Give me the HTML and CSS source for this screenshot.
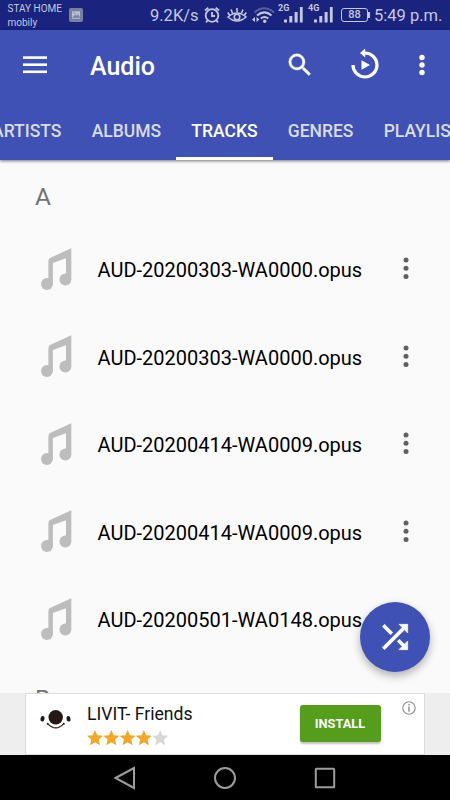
FILE: index.html
```html
<!DOCTYPE html>
<html lang="en">
<head>
<meta charset="utf-8">
<title>Audio</title>
<link rel="stylesheet" href="styles.css">
</head>
<body>
<div class="screen">
  <header class="status">
    <div class="carrier"><span>STAY HOME</span><span>mobily</span></div>
    <svg class="thumb" width="14" height="14" viewBox="0 0 14 14"><rect width="14" height="14" rx="2" fill="#76809f"/><rect x="3" y="3.3" width="8" height="7.4" fill="#bac0d0"/><path d="M3.5 9.8L6 7l1.5 1.3L9 6.5l1.8 3.3M4 4.5l3 1.5" fill="#76809f" stroke="#76809f" stroke-width=".6"/></svg>
    <span class="speed">9.2K/s</span>
    <svg class="alarm" width="16" height="18" viewBox="0 0 16 18" fill="none" stroke="#c5c8de" stroke-width="1.8"><circle cx="8" cy="9.5" r="6.3"/><path d="M8 6v4h3M1 4.5L4.3 1.7M15 4.5l-3.3-2.8M3.5 14.5L2 16.3M12.5 14.5l1.5 1.8"/></svg>
    <svg class="eye" width="20" height="18" viewBox="0 0 20 18" fill="none" stroke="#c5c8de" stroke-width="1.6"><path d="M1 11Q10 3 19 11Q10 19 1 11ZM10 6V2M5.5 7L4 3.5M14.500 7L16 3.500M2.500 9L.8 6.500M17.500 9l1.700-2.500"/><circle cx="10" cy="11" r="2.800"/></svg>
    <svg class="wifi" width="23" height="18" viewBox="0 0 23 18" fill="none" stroke-width="2"><path d="M2.500 6.500Q12.500-2 22 6.500" stroke="#555fa0"/><path d="M5 9.500Q12.500 3.300 19.500 9.500M8.800 12.500Q12.500 9.500 16.300 12.500" stroke="#c5c8de"/><circle cx="12.700" cy="15.300" r="1.700" fill="#c5c8de"/><path d="M0 13.500L3 11v5ZM7.500 13.500L4.500 11v5Z" fill="#c5c8de"/></svg>
    <div class="signal"><span>2G</span><svg width="20" height="16" viewBox="0 0 20 16" fill="#c5c8de"><rect y="12.500" width="3" height="3"/><rect x="5.300" y="9" width="3" height="6.500"/><rect x="10.600" y="5" width="3" height="10.500"/><rect x="15.900" width="2.800" height="15.500"/></svg></div>
    <div class="signal second"><span>4G</span><svg width="20" height="16" viewBox="0 0 20 16" fill="#c5c8de"><rect y="12.500" width="3" height="3"/><rect x="5.300" y="9" width="3" height="6.500"/><rect x="10.600" y="5" width="3" height="10.500"/><rect x="15.900" width="2.800" height="15.500"/></svg></div>
    <div class="battery">88</div>
    <span class="clock">5:49 p.m.</span>
  </header>
  <div class="appbar">
    <div class="toolbar">
      <svg class="burger" width="24" height="18" viewBox="0 0 24 18" fill="#fff"><rect y=".3" width="24" height="2.600"/><rect y="7.400" width="24" height="2.600"/><rect y="14.500" width="24" height="2.600"/></svg>
      <h1>Audio</h1>
      <svg class="search" width="30" height="30" viewBox="0 0 24 24" fill="#fff" stroke="#fff" stroke-width=".3"><path d="M15.500 14h-.79l-.28-.27A6.470 6.470 0 0 0 16 9.500 6.500 6.500 0 1 0 9.500 16c1.610 0 3.090-.59 4.230-1.570l.27.28v.79l5 4.990L20.490 19l-4.990-5zm-6 0C7.010 14 5 11.990 5 9.500S7.010 5 9.500 5 14 7.010 14 9.500 11.990 14 9.500 14z"/></svg>
      <svg class="replay" width="30" height="34" viewBox="0 0 30 34"><path d="M3 17A12 12 0 1 0 15 5" fill="none" stroke="#fff" stroke-width="3.200"/><path d="M15.200 .4v9.200L10 5ZM11.500 12.300L20 17l-8.500 4.700Z" fill="#fff"/></svg>
      <svg class="more" width="6" height="22" viewBox="0 0 6 22" fill="#fff"><circle cx="3" cy="3.500" r="2.700"/><circle cx="3" cy="11" r="2.700"/><circle cx="3" cy="18.500" r="2.700"/></svg>
    </div>
    <nav class="tabs"><span>ARTISTS</span><span>ALBUMS</span><span class="active">TRACKS</span><span>GENRES</span><span>PLAYLISTS</span></nav>
  </div>
  <svg class="defs" width="0" height="0"><defs>
    <g id="note"><path d="M7.400 36V13Q7.400 10.500 9.500 9.700L30.300.3V31.500H25V10.200L11.900 15V36Z"/><circle cx="5.900" cy="36" r="5.900"/><circle cx="24.400" cy="31.500" r="5.900"/></g>
    <g id="dots"><circle cx="3" cy="3" r="2.500"/><circle cx="3" cy="11.200" r="2.500"/><circle cx="3" cy="19.400" r="2.500"/></g>
    <path id="star" d="M8 0l2.300 5.200 5.700.5-4.300 3.800 1.300 5.700L8 12.200l-5 3 1.300-5.700L0 5.700l5.700-.5Z"/>
  </defs></svg>
  <main class="list">
    <h2>A</h2>
    <div class="row"><svg class="note" width="31" height="42"><use href="#note"/></svg><span>AUD-20200303-WA0000.opus</span><svg class="dots" width="6" height="23"><use href="#dots"/></svg></div>
    <div class="row"><svg class="note" width="31" height="42"><use href="#note"/></svg><span>AUD-20200303-WA0000.opus</span><svg class="dots" width="6" height="23"><use href="#dots"/></svg></div>
    <div class="row"><svg class="note" width="31" height="42"><use href="#note"/></svg><span>AUD-20200414-WA0009.opus</span><svg class="dots" width="6" height="23"><use href="#dots"/></svg></div>
    <div class="row"><svg class="note" width="31" height="42"><use href="#note"/></svg><span>AUD-20200414-WA0009.opus</span><svg class="dots" width="6" height="23"><use href="#dots"/></svg></div>
    <div class="row"><svg class="note" width="31" height="42"><use href="#note"/></svg><span>AUD-20200501-WA0148.opus</span></div>
    <h2 class="next">B</h2>
  </main>
  <div class="fab"><svg width="38" height="38" viewBox="0 0 24 24" fill="#fff" stroke="#fff" stroke-width=".45"><path d="M10.590 9.170L5.410 4 4 5.410l5.170 5.170 1.420-1.410zM14.500 4l2.040 2.040L4 18.590 5.410 20 17.960 7.460 20 9.500V4h-5.500zm.33 9.410l-1.410 1.410 3.130 3.130L14.500 20H20v-5.500l-2.040 2.040-3.130-3.130z"/></svg></div>
  <aside class="adband">
    <div class="ad">
      <svg class="face" width="32" height="20" viewBox="0 0 32 20"><circle cx="15.700" cy="7.300" r="7.200" fill="#231815"/><ellipse cx="2.500" cy="8.800" rx="2" ry="2.800" transform="rotate(12 2.500 8.800)" fill="#231815"/><ellipse cx="28.500" cy="8.800" rx="2" ry="2.800" transform="rotate(-12 28.500 8.800)" fill="#231815"/><path d="M7.500 13.300Q15.700 22.500 24 13.300M6.800 14.200l1.600-1.200M24.700 14.200L23.100 13" fill="none" stroke="#231815" stroke-width="1.100"/></svg>
      <div class="info"><span>LIVIT- Friends</span>
        <svg width="82" height="16" fill="#f5a623"><use href="#star"/><use href="#star" x="16.300"/><use href="#star" x="32.600"/><use href="#star" x="48.900"/><use href="#star" x="65.200" fill="#d8d8d8"/></svg></div>
      <div class="install">INSTALL</div>
      <svg class="about" width="14" height="14" viewBox="0 0 14 14"><circle cx="7" cy="7" r="6.200" fill="none" stroke="#8c8c8c" stroke-width="1.100"/><path d="M6.300 3h1.400v1.400H6.300ZM6.300 5.500h1.400v5.300H6.300Z" fill="#8c8c8c"/></svg>
    </div>
  </aside>
  <footer class="navbar"><svg width="24" height="24" viewBox="0 0 24 24"><path d="M2.500 12L21 2v20Z"/></svg><svg width="24" height="24" viewBox="0 0 24 24"><circle cx="12" cy="12" r="10"/></svg><svg width="24" height="24" viewBox="0 0 24 24"><rect x="2.800" y="2.800" width="18.400" height="18.400" rx=".5"/></svg></footer>
</div>
</body>
</html>
```
FILE: styles.css
```css
* { box-sizing: border-box; }
body { margin: 0; font-family: Roboto, "Liberation Sans", sans-serif; }
svg { display: block; flex: none; }
.screen { position: relative; width: 450px; height: 800px; overflow: hidden; display: flex; flex-direction: column; background: #fafafa; }
.defs { display: none; }

.status { height: 30px; flex: none; display: flex; align-items: center; background: #1a237e; color: #c5c8de; white-space: nowrap; }
.carrier { width: 61.500px; padding-left: 7.500px; display: flex; flex-direction: column; font-size: 10px; line-height: 14px; padding-top: 2px; }
.thumb { margin-left: 7.500px; }
.speed { width: 54px; margin-left: 67px; font-size: 16.500px; padding-top: 1px; }
.eye { margin-left: 7px; }
.wifi { margin-left: 5px; }
.signal { position: relative; width: 26px; height: 16px; margin-left: 3px; display: flex; justify-content: flex-end; }
.signal.second { margin-left: 4px; }
.signal span { position: absolute; left: 0; top: -3px; font-size: 9px; line-height: 9px; font-weight: 700; }
.battery { position: relative; width: 27px; height: 14px; margin-left: 7px; border: 1.500px solid #c5c8de; border-radius: 3px; font-size: 11px; font-weight: 500; line-height: 12px; text-align: center; }
.battery::after { content: ""; position: absolute; right: -3px; top: 3px; width: 2px; height: 6px; background: #c5c8de; }
.clock { margin-left: 6px; font-size: 16.500px; padding-top: 1px; }

.appbar { position: relative; height: 130px; flex: none; display: flex; flex-direction: column; background: #3f51b5; color: #fff; box-shadow: 0 1px 3px rgba(0,0,0,.55); z-index: 1; }
.toolbar { height: 70px; display: flex; align-items: center; padding-left: 23px; }
.burger { margin-right: 43px; }
h1 { margin: 0; width: 195px; font-size: 25px; font-weight: 500; line-height: 30px; padding-top: 3px; }
.replay { margin-left: 35px; }
.more { margin-left: 39px; }
.tabs { height: 60px; margin-left: -23px; display: flex; font-size: 17.500px; font-weight: 500; line-height: 62px; color: #d9dbe5; white-space: nowrap; }
.tabs span { padding: 0 15.100px; flex: none; }
.tabs .active { color: #fff; border-bottom: 3px solid #fff; }

.list { height: 532.500px; flex: none; overflow: hidden; }
h2 { margin: 0; height: 65px; padding: 8px 0 0 35px; font-size: 24.500px; line-height: 58px; font-weight: 400; color: #737373; }
.row { height: 87.500px; display: flex; align-items: center; padding-left: 41px; font-size: 20px; color: #000; }
.row span { margin-left: 25.600px; width: 305.400px; padding-top: 3px; }
.note { fill: #bdbdbd; }
.dots { fill: #606060; }
.next { height: 30px; padding-top: 0; line-height: 71px; }
.fab { position: absolute; left: 360px; top: 602px; width: 70px; height: 70px; border-radius: 50%; display: grid; place-items: center; background: #3f51b5; box-shadow: 0 4px 8px rgba(0,0,0,.3); }

.adband { height: 62.500px; flex: none; display: flex; justify-content: center; background: #eee; }
.ad { width: 400px; height: 62.500px; display: flex; border: 1px solid #ddd; background: #fff; }
.face { margin: 16px 0 0 14px; }
.info { width: 212.500px; margin-left: 15px; display: flex; flex-direction: column; font-size: 17.600px; line-height: 24px; padding-top: 8px; color: #111; }
.info svg { margin-top: 4px; }
.install { width: 81px; height: 37px; margin-top: 11.500px; border-radius: 3px; background: #549e1c; color: #fff; font-size: 12.800px; font-weight: 700; line-height: 38px; text-align: center; box-shadow: 0 2px 2px rgba(0,0,0,.25); }
.about { margin: 7.500px 0 0 21px; }
.navbar { height: 45px; flex: none; display: flex; justify-content: center; align-items: center; gap: 76px; background: #000; }
.navbar svg { fill: none; stroke: #9c9c9c; stroke-width: 2; }
```
